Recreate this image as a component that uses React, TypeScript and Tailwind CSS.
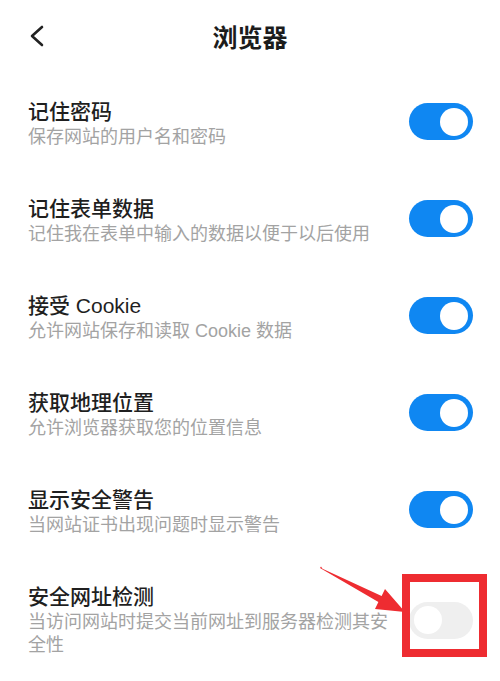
import React from 'react';

const items = [
  { title: '记住密码', desc: '保存网站的用户名和密码', on: true },
  { title: '记住表单数据', desc: '记住我在表单中输入的数据以便于以后使用', on: true },
  { title: '接受 Cookie', desc: '允许网站保存和读取 Cookie 数据', on: true },
  { title: '获取地理位置', desc: '允许浏览器获取您的位置信息', on: true },
  { title: '显示安全警告', desc: '当网站证书出现问题时显示警告', on: true },
  { title: '安全网址检测', desc: '当访问网站时提交当前网址到服务器检测其安全性', on: false },
];

function Toggle({ on }: { on: boolean }) {
  return (
    <div
      className={`w-[64px] h-[37px] rounded-full flex items-center px-[5px] shrink-0 ${
        on ? 'bg-[#0f87f2] justify-end' : 'bg-[#efefef] justify-start'
      }`}
    >
      <div className="w-[28px] h-[28px] rounded-full bg-white" />
    </div>
  );
}

export default function App() {
  return (
    <div
      className="relative w-[500px] h-[681px] bg-white overflow-hidden"
      style={{ fontFamily: '"Noto Sans CJK SC", "Noto Sans", sans-serif' }}
    >
      {/* header */}
      <div className="relative h-[72px] flex items-center justify-center">
        <svg className="absolute left-[29px] top-[25px]" width="16" height="22" viewBox="0 0 16 22" fill="none">
          <path d="M13 2 L3 11 L13 20" stroke="#222" strokeWidth="2.6" strokeLinecap="round" strokeLinejoin="round" />
        </svg>
        <h1 className="text-[25px] font-bold text-[#1c1c1c] leading-none">浏览器</h1>
      </div>

      {/* settings list */}
      <div className="pt-[3px] font-['Liberation_Sans','Noto_Sans_CJK_SC',sans-serif]">
        {items.map((it) => (
          <div key={it.title} className="flex items-center justify-between pl-[28px] pr-[27px] py-[23px]">
            <div className="w-[364px]">
              <div className="text-[21px] leading-[28px] font-medium text-[#1f1f1f]">{it.title}</div>
              <div className="text-[18px] leading-[23px] text-[#a3a3a3]">{it.desc}</div>
            </div>
            <div className={it.on ? '-translate-y-[2px]' : ''}>
              <Toggle on={it.on} />
            </div>
          </div>
        ))}
      </div>

      {/* annotation: red box + arrow */}
      <div className="absolute left-[402px] top-[574px] w-[85px] h-[83px] border-[8px] border-[#ee2c31]" />
      <svg className="absolute left-0 top-0 pointer-events-none" width="500" height="681" viewBox="0 0 500 681">
        <polygon
          points="321,566.5 322.5,568.8 381.6,595.9 385,589 405,612 375,609 378.4,602.1 320,568"
          fill="#ee2c31"
        />
      </svg>
    </div>
  );
}
